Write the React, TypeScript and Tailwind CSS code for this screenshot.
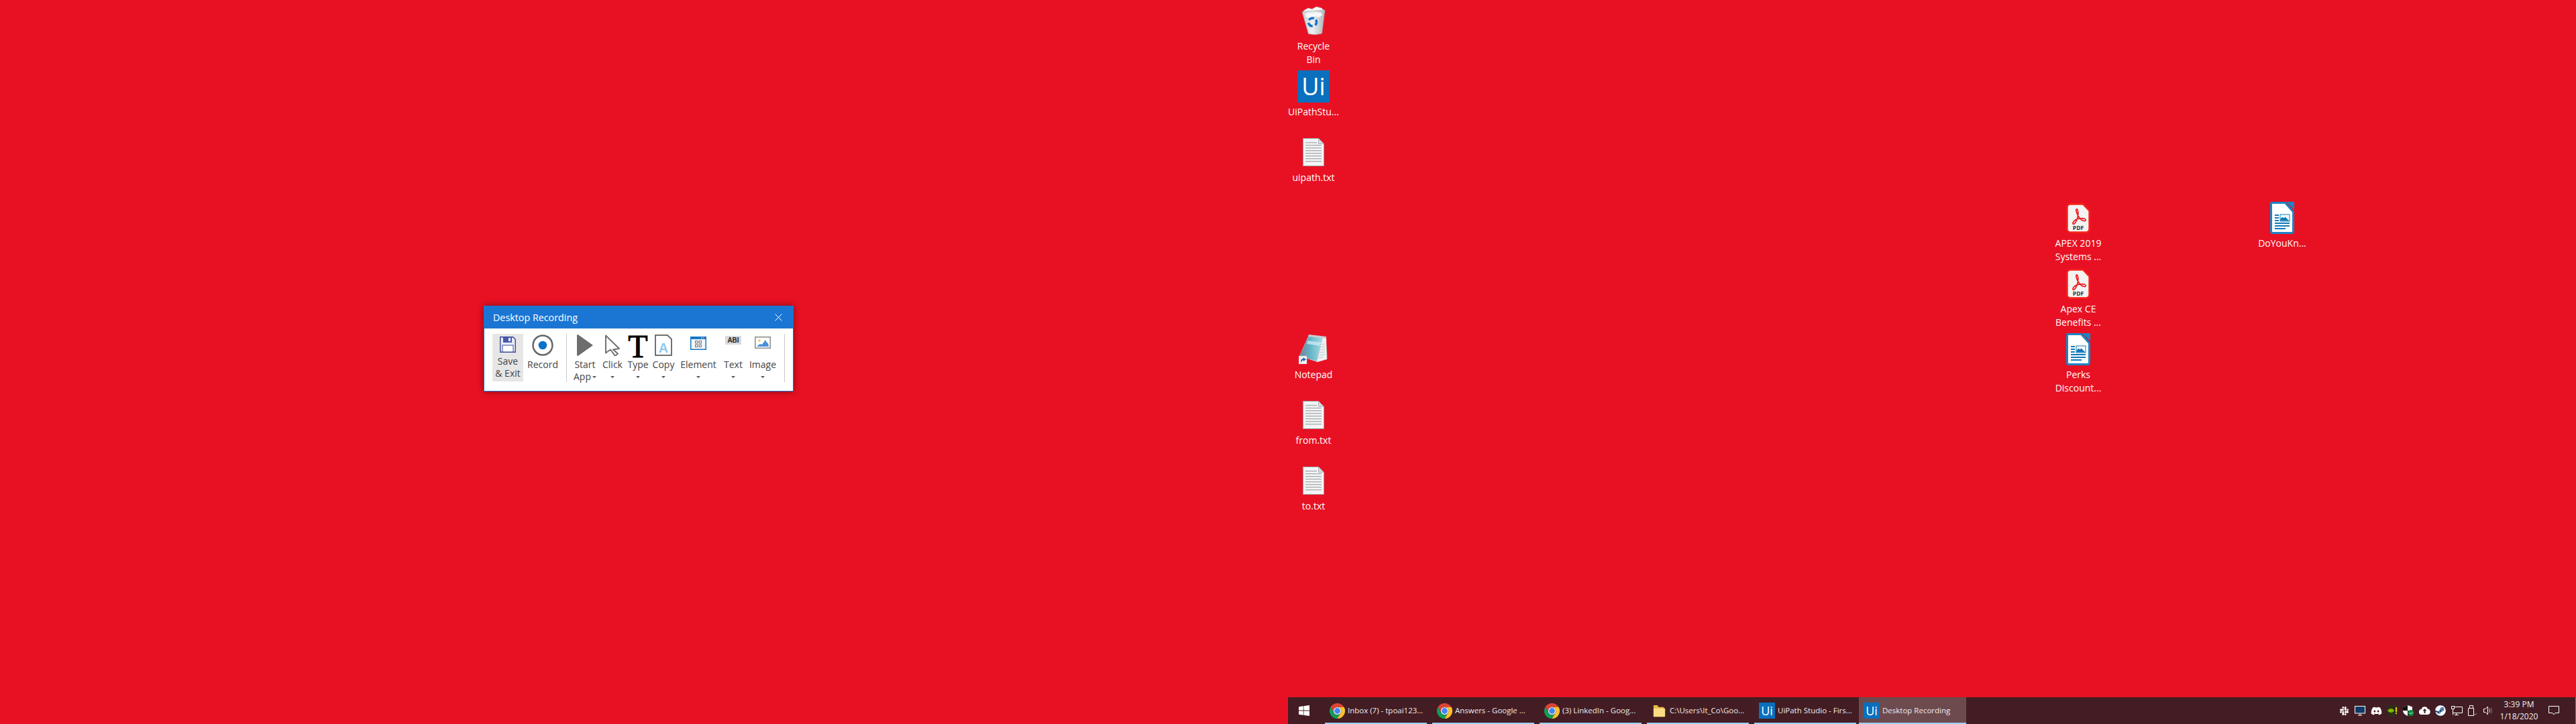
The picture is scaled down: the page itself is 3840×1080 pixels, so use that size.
import type { ReactNode } from "react";
import { FaDiscord, FaSlack, FaSteam } from "react-icons/fa";

const uiFont = "font-['Open_Sans','Noto_Sans',sans-serif]";

function TextFileIcon() {
  return (
    <svg width="32" height="42" viewBox="0 0 32 42">
      <path d="M.5.5h23l8 8v33H.5z" fill="#f4f5f6" stroke="#9aa0a4" />
      <path d="M23.5.5v8h8z" fill="#d5d9dc" stroke="#b0b5b8" />
      {[6, 10, 14, 18, 22, 26, 30, 34].map((y) => (
        <rect key={y} x="4" y={y} width={y < 10 ? 17 : 24} height="1.4" fill="#a9aeb2" />
      ))}
    </svg>
  );
}

function PdfIcon() {
  return (
    <svg width="36" height="45" viewBox="0 0 36 45">
      <path d="M6 1.5h19l9.5 10V38a5 5 0 0 1-5 5.5H6A4.5 4.5 0 0 1 1.5 39V6A4.5 4.5 0 0 1 6 1.5z" fill="#f3f3f3" stroke="#fb2118" strokeWidth="2.4" />
      <path
        d="M15.5 9c-2 1 .5 7 3 11 2 3.500 5.500 6 8.500 6.500 2.500.4 3-2.500.5-3.300-3.500-1.200-10-.2-13.500 1.800-3.500 2-5 5.500-3.500 6.200 1.800.8 4.500-3.500 5.800-7.500 1.200-3.700 2-8.500 1.200-12-.3-1.500-1.200-3-2-2.700z"
        fill="none"
        stroke="#f2161c"
        strokeWidth="1.7"
      />
      <text x="18" y="40" textAnchor="middle" fontFamily="Open Sans, sans-serif" fontWeight="700" fontSize="8.500" fill="#2f2f2f">
        PDF
      </text>
    </svg>
  );
}

function WriterIcon() {
  return (
    <svg width="36" height="48" viewBox="0 0 36 48">
      <path d="M2 1.500h20.500L34.500 15v29a2.500 2.500 0 0 1-2.500 2.500H4A2.500 2.500 0 0 1 1.500 44V3z" fill="#fff" stroke="#1b84c5" strokeWidth="3" />
      <path d="M24 0h12v12z" fill="#1b84c5" />
      <path d="M7 19h6v2H7zm0 4h6v2H7zm0 4h6v2H7zM7 31h22v2H7zm0 4h22v2H7zm0 4h16v2H7z" fill="#1078b8" />
      <rect x="15" y="19" width="14" height="10" fill="#fff" stroke="#1078b8" />
      <path d="M15.500 28.500v-3l3-3 2 2 2-2 2 2 4 4z" fill="#1078b8" />
    </svg>
  );
}

function RecycleBinIcon() {
  return (
    <svg width="36" height="42" viewBox="0 0 36 42">
      <defs>
        <linearGradient id="bin" x1="0" x2="1" y1="0" y2="0">
          <stop offset="0" stopColor="#c6cbd0" />
          <stop offset=".45" stopColor="#eef0f1" />
          <stop offset="1" stopColor="#aeb4b9" />
        </linearGradient>
      </defs>
      <path d="M3 6l7-4 6 1.500L22 0l8 2 5 5-4 5H6z" fill="#f6f6f6" stroke="#b5b9bc" strokeWidth=".5" />
      <path d="M1 7.500L35 5l-4.500 35q-10 3-20 .5z" fill="url(#bin)" stroke="#a3a9ae" strokeWidth=".7" />
      <path d="M5 11l6-2 5 2 6-3 8 1 1 4-6 3-5-2-6 3-7-2z" fill="#fff" opacity=".8" />
      <circle cx="16.500" cy="23" r="6" fill="none" stroke="#1674c6" strokeWidth="3.500" strokeDasharray="8.500 4" transform="rotate(-35 16.500 23)" />
    </svg>
  );
}

function NotepadIcon() {
  return (
    <svg width="44" height="44" viewBox="0 0 44 44">
      <defs>
        <linearGradient id="pad" x1="0" x2="1" y1="0" y2="0">
          <stop offset="0" stopColor="#7c7f93" />
          <stop offset=".45" stopColor="#62b3c6" />
          <stop offset="1" stopColor="#a9dce6" />
        </linearGradient>
      </defs>
      <path d="M40 3l3.500 32-2 3z" fill="#8a6b32" />
      <path d="M15 1l26 3 1 33-14 4L1 32z" fill="#eef2f3" />
      <path d="M15 2l21 3-9 35L1 32z" fill="url(#pad)" />
      <path d="M13.500 9l21 3-1.500 5-21-3z" fill="#d4eef3" opacity=".7" />
      <path d="M31 15l8-1M30 19l9-1M29 23l10-1M28 27l11-1M27 31l12-1M27 35l9-1" stroke="#b9c3c7" strokeWidth=".8" />
      <path d="M15 0l26 3v3L14 3z" fill="#c8cdd0" />
      <rect x="0" y="32" width="12" height="12" fill="#f3f3f3" stroke="#bbb" strokeWidth=".5" />
      <path d="M3 42c0-4 1-6 4-6l-1-2 5 3-4 3-.5-2c-1 .4-2 1.500-3.500 4z" fill="#1f5fb0" />
    </svg>
  );
}

function UiLogo({ big }: { big?: boolean }) {
  return (
    <div
      className={
        big
          ? `flex h-[48px] w-[48px] items-center justify-center bg-[#0a6fbd] text-[36px] leading-none text-white ${uiFont}`
          : `flex h-[24px] w-[24px] items-center justify-center bg-[#0a6fbd] text-[18px] leading-none text-white ${uiFont}`
      }
    >
      Ui
    </div>
  );
}

function DesktopIcon({ className, icon, children }: { className: string; icon: ReactNode; children: ReactNode }) {
  return (
    <div className={`absolute flex w-[100px] flex-col items-center ${className}`}>
      <div className="flex h-[50px] items-center justify-center">{icon}</div>
      <div className={`mt-[3px] w-full text-center text-[14px] leading-[20px] text-white ${uiFont}`}>{children}</div>
    </div>
  );
}

function Caret() {
  return <span className="inline-block h-0 w-0 border-x-[3px] border-t-[3px] border-x-transparent border-t-[#555]" />;
}

function ToolButton({ label, width, icon, caret = true }: { label: string; width: string; icon: ReactNode; caret?: boolean }) {
  return (
    <div className={`flex flex-col items-center ${width}`}>
      <div className="flex h-[37px] w-full items-start justify-center pt-px">{icon}</div>
      <div className="text-center leading-[18px]">{label}</div>
      {caret && (
        <div className="flex h-[18px] items-center">
          <Caret />
        </div>
      )}
    </div>
  );
}

function FloppyIcon() {
  return (
    <svg width="24" height="24" viewBox="0 0 24 24">
      <path d="M.7.700h19l3.600 3.600v19H.7z" fill="#e8eaf6" stroke="#3c4a9c" strokeWidth="1.400" />
      <rect x="5" y="1" width="13" height="8" fill="#4a59ab" />
      <rect x="13" y="2" width="3" height="5" fill="#e8eaf6" />
      <rect x="4" y="13" width="16" height="10" fill="#fff" stroke="#3c4a9c" />
    </svg>
  );
}

function ElementIcon() {
  return (
    <svg width="24" height="20" viewBox="0 0 24 20">
      <rect width="24" height="20" fill="#1478c4" />
      <rect x="1.500" y="4" width="21" height="14.500" fill="#f4f6f8" />
      <path d="M16 1.500h1.500v1H16zm2.500 0H20v1h-1.500z" fill="#fff" />
      <path d="M21 1.500h1.500v1H21z" fill="#f2555a" />
      <path d="M7.500 6.500h3.500V10H7.500zm5.500 0h3.500V10H13zm-5.500 5.500h3.500v3.500H7.500zm5.500 0h3.500v3.500H13z" fill="none" stroke="#6b6b6b" strokeWidth="1" />
    </svg>
  );
}

function ImageIcon() {
  return (
    <svg width="24" height="18" viewBox="0 0 24 18">
      <rect x=".75" y=".75" width="22.500" height="16.500" fill="#fff" stroke="#8a8a8a" strokeWidth="1.500" />
      <circle cx="7" cy="6" r="1.800" fill="#f2c94c" />
      <path d="M3 15l5-4 3 1 5-7 2 4 2 1 1 5z" fill="#4a90d9" />
    </svg>
  );
}

function ChromeIcon() {
  return (
    <svg className="h-[23px] w-[23px] shrink-0" viewBox="0 0 24 24">
      <path d="M12 0C7.600 0 3.700 2.400 1.600 6l5.200 9A6 6 0 0 1 12 6h10.400C20.300 2.400 16.400 0 12 0z" fill="#db4437" />
      <path d="M1.600 6A12 12 0 0 0 12 24l5.200-9A6 6 0 0 1 6.800 15z" fill="#0f9d58" />
      <path d="M22.400 6H12a6 6 0 0 1 5.200 9L12 24a12 12 0 0 0 10.400-18z" fill="#fbc02d" />
      <circle cx="12" cy="12" r="5.800" fill="#fff" />
      <circle cx="12" cy="12" r="4.600" fill="#4285f4" />
    </svg>
  );
}

function FolderIcon() {
  return (
    <svg className="h-[23px] w-[23px] shrink-0" viewBox="0 0 24 24">
      <path d="M3 3h6l2 3h8v15H3z" fill="#e8b93f" />
      <path d="M3 8h18v13H3z" fill="#fbdc82" />
    </svg>
  );
}

function TaskButton({ width, icon, label, active }: { width: string; icon: ReactNode; label: string; active?: boolean }) {
  return (
    <div
      className={`flex h-full items-center gap-[4px] border-b-2 border-[#99d1ff] pl-[7px] pt-[2px] text-[11.5px] text-[#f1eced] ${width} ${active ? "bg-[#6d4a4e]" : ""}`}
    >
      {icon}
      <span className="whitespace-nowrap">{label}</span>
    </div>
  );
}

function TrayIcon({ children }: { children: ReactNode }) {
  return <div className="flex h-full w-6 items-center justify-center">{children}</div>;
}

export default function App() {
  return (
    <div className={`relative flex h-[1080px] w-[3840px] flex-col justify-end overflow-hidden bg-[#e81123] ${uiFont}`}>
      {/* desktop icons sit on a free canvas */}
      <DesktopIcon className="left-[1908px] top-[6px]" icon={<RecycleBinIcon />}>
        Recycle
        <br />
        Bin
      </DesktopIcon>
      <DesktopIcon className="left-[1908px] top-[104px]" icon={<UiLogo big />}>
        UiPathStu...
      </DesktopIcon>
      <DesktopIcon className="left-[1908px] top-[202px]" icon={<TextFileIcon />}>
        uipath.txt
      </DesktopIcon>
      <DesktopIcon className="left-[1908px] top-[496px]" icon={<NotepadIcon />}>
        Notepad
      </DesktopIcon>
      <DesktopIcon className="left-[1908px] top-[594px]" icon={<TextFileIcon />}>
        from.txt
      </DesktopIcon>
      <DesktopIcon className="left-[1908px] top-[692px]" icon={<TextFileIcon />}>
        to.txt
      </DesktopIcon>
      <DesktopIcon className="left-[3048px] top-[300px]" icon={<PdfIcon />}>
        APEX 2019
        <br />
        Systems ...
      </DesktopIcon>
      <DesktopIcon className="left-[3048px] top-[398px]" icon={<PdfIcon />}>
        Apex CE
        <br />
        Benefits ...
      </DesktopIcon>
      <DesktopIcon className="left-[3048px] top-[496px]" icon={<WriterIcon />}>
        Perks
        <br />
        Discount...
      </DesktopIcon>
      <DesktopIcon className="left-[3352px] top-[300px]" icon={<WriterIcon />}>
        DoYouKn...
      </DesktopIcon>

      {/* recording toolbar window */}
      <div className="absolute left-[721px] top-[456px] flex h-[128px] w-[462px] flex-col border border-[#1b76d3] bg-white shadow-[0_0_10px_rgba(0,0,0,0.45)]">
        <div className="flex h-[33px] shrink-0 items-center justify-between bg-[#1b76d3] pl-[13px] pr-[16px] text-[14.3px] text-white">
          <span>Desktop Recording</span>
          <svg width="11" height="11" viewBox="0 0 11 11" stroke="#fff" strokeWidth="1">
            <path d="M.5.500l10 10M10.500.500l-10 10" />
          </svg>
        </div>
        <div className="flex items-start pl-[12px] pt-[8px] text-[14px] text-[#444]">
          <div className="flex h-[71px] w-[46px] flex-col items-center bg-[#e6e6e6] pt-[4px] text-center leading-[18px]">
            <div className="mb-[4px]">
              <FloppyIcon />
            </div>
            <span>Save</span>
            <span className="whitespace-nowrap">&amp; Exit</span>
          </div>
          <ToolButton
            label="Record"
            width="w-[58px]"
            caret={false}
            icon={
              <svg width="32" height="32" viewBox="0 0 32 32">
                <circle cx="16" cy="16" r="14.500" fill="#fff" stroke="#666" strokeWidth="2.500" />
                <circle cx="16" cy="16" r="6.300" fill="#0a72c8" />
              </svg>
            }
          />
          <div className="ml-[6px] mr-[4px] h-[72px] w-px shrink-0 bg-[#c9c9c9]" />
          <div className="flex w-[46px] flex-col items-center">
            <div className="flex h-[37px] items-start pt-px">
              <svg width="24" height="32" viewBox="0 0 24 32">
                <path d="M1.500 0L24 16 1.500 32A1.500 1.500 0 0 1 0 30.500V1.500A1.500 1.500 0 0 1 1.500 0z" fill="#6d6d6d" />
              </svg>
            </div>
            <div className="text-center leading-[18px]">
              Start
              <br />
              <span className="inline-flex items-center gap-[2px]">
                App
                <Caret />
              </span>
            </div>
          </div>
          <ToolButton
            label="Click"
            width="w-[36px]"
            icon={
              <svg width="24" height="32" viewBox="0 0 24 32">
                <path d="M2 1.500L22 21l-9 1.500 7 6-4 3.500-7-9.500-7 5z" fill="#fff" stroke="#707070" strokeWidth="2" strokeLinejoin="round" />
              </svg>
            }
          />
          <ToolButton
            label="Type"
            width="w-[40px]"
            icon={<span className="font-['Liberation_Serif',serif] text-[48px] leading-[36px] text-black [-webkit-text-stroke:1px_black]">T</span>}
          />
          <ToolButton
            label="Copy"
            width="w-[36px]"
            icon={
              <div className="relative h-[32px] w-[26px]">
                <svg className="absolute inset-0" width="26" height="32" viewBox="0 0 26 32">
                  <path d="M1 1h18l6 6v24H1z" fill="#fff" stroke="#707070" strokeWidth="2" />
                </svg>
                <span className="absolute inset-x-0 top-[11px] text-center font-['Liberation_Sans',sans-serif] text-[20px] font-bold leading-[18px] text-[#8fc8ef]">
                  A
                </span>
              </div>
            }
          />
          <ToolButton
            label="Element"
            width="w-[68px]"
            icon={
              <div className="pt-[3px]">
                <ElementIcon />
              </div>
            }
          />
          <ToolButton
            label="Text"
            width="w-[36px]"
            icon={
              <div className="mt-[2px] flex h-[13px] w-[24px] items-center justify-center bg-[#d9d9d9] font-['Liberation_Sans',sans-serif] text-[10px] font-bold leading-none text-[#222]">
                ABI
              </div>
            }
          />
          <ToolButton
            label="Image"
            width="w-[52px]"
            icon={
              <div className="pt-[3px]">
                <ImageIcon />
              </div>
            }
          />
          <div className="ml-[6px] h-[72px] w-px shrink-0 bg-[#c9c9c9]" />
        </div>
      </div>

      {/* the taskbar only spans the right monitor */}
      <div className="flex h-10 w-[1920px] items-stretch self-end bg-[#431d23]">
        <div className="flex w-[55px] shrink-0 items-center pl-[16px]">
          <svg width="16" height="16" viewBox="0 0 16 16" fill="#fff">
            <path d="M0 2.300l6.800-1v6.300H0zM7.500 1.200L16 0v7.600H7.500zM0 8.400h6.800v6.300l-6.800-1zM7.500 8.400H16V16l-8.500-1.200z" />
          </svg>
        </div>
        <div className="flex items-stretch gap-[8px]">
          <TaskButton width="w-[152px]" icon={<ChromeIcon />} label="Inbox (7) - tpoai123..." />
          <TaskButton width="w-[152px]" icon={<ChromeIcon />} label="Answers - Google ..." />
          <TaskButton width="w-[152px]" icon={<ChromeIcon />} label="(3) LinkedIn - Goog..." />
          <TaskButton width="w-[152px]" icon={<FolderIcon />} label="C:\Users\It_Co\Goo..." />
          <TaskButton width="w-[152px]" icon={<UiLogo />} label="UiPath Studio - Firs..." />
        </div>
        <div className="ml-[4px]">
          <TaskButton width="w-[160px]" icon={<UiLogo />} label="Desktop Recording" active />
        </div>

        <div className="ml-auto flex items-stretch text-white">
          <TrayIcon>
            <FaSlack className="h-[15px] w-[15px]" />
          </TrayIcon>
          <TrayIcon>
            <svg width="16" height="15" viewBox="0 0 16 15">
              <rect x=".5" y=".5" width="15" height="10.500" fill="#0f3a68" stroke="#fff" />
              <path d="M5 14h6M8 11v3" stroke="#fff" />
            </svg>
          </TrayIcon>
          <TrayIcon>
            <FaDiscord className="h-[17px] w-[17px]" />
          </TrayIcon>
          <TrayIcon>
            <svg width="16" height="16" viewBox="0 0 16 16">
              <rect width="16" height="16" fill="#2e2c1c" />
              <path d="M1 8c3-4 8-4 10 0-2 4-7 4-10 0z" fill="#76b900" />
              <rect x="13" y="3" width="2" height="7" fill="#f5d000" />
              <rect x="13" y="11" width="2" height="2" fill="#f5d000" />
            </svg>
          </TrayIcon>
          <TrayIcon>
            <svg width="18" height="16" viewBox="0 0 18 16">
              <path d="M8 0l7 2.500V8c0 3.500-3 6.500-7 8-4-1.500-7-4.500-7-8V2.500z" fill="#fff" />
              <path d="M8 0v8H1V2.500zM8 8h7c0 3.500-3 6.500-7 8z" fill="#111" />
              <circle cx="13" cy="11.500" r="4.500" fill="#10893e" />
              <path d="M11 11.500l1.500 1.500 2.500-2.500" fill="none" stroke="#fff" />
            </svg>
          </TrayIcon>
          <TrayIcon>
            <svg width="17" height="12" viewBox="0 0 17 12">
              <path d="M4 12a4 4 0 0 1-.5-8A5 5 0 0 1 13 3.500 4.300 4.300 0 0 1 13 12z" fill="#fff" />
              <path d="M8.500 3l3 3.500H9.500V10h-2V6.500h-2z" fill="#431d23" />
            </svg>
          </TrayIcon>
          <TrayIcon>
            <div className="flex h-4 w-4 items-center justify-center rounded-full bg-[#1b4f86]">
              <FaSteam className="h-4 w-4 text-white" />
            </div>
          </TrayIcon>
          <TrayIcon>
            <svg width="17" height="15" viewBox="0 0 17 15" fill="none" stroke="#fff" strokeWidth="1">
              <path d="M4.500 1.500h12v9h-12M.5.500h4v4h-4zM2.500 4.500v9M2.500 10.500h5v3M5 13.500h6" />
            </svg>
          </TrayIcon>
          <TrayIcon>
            <svg width="14" height="16" viewBox="0 0 14 16" fill="none" stroke="#fff" strokeWidth="1">
              <path d="M2.500.500h5v4h-5zM.5 4.500h8v11h-8z" />
              <path d="M9 13l1.500 1.500L13 12" stroke="#aaa" />
            </svg>
          </TrayIcon>
          <TrayIcon>
            <svg width="16" height="16" viewBox="0 0 16 16" fill="none" stroke="#fff" strokeWidth="1">
              <path d="M.5 5.500h2.500l3.500-3.500v12L3 10.500H.5z" />
              <path d="M9 5q1.500 3 0 6" stroke="#ddd" />
              <path d="M11.500 3.500q2.500 4.500 0 9" stroke="#8d7376" />
            </svg>
          </TrayIcon>
          <div className="flex w-[66px] flex-col items-center justify-center text-[12px] leading-[18px] text-[#f1eced]">
            <span>3:39 PM</span>
            <span>1/18/2020</span>
          </div>
          <div className="flex w-[38px] items-center justify-center">
            <svg width="16" height="16" viewBox="0 0 16 16" fill="none" stroke="#fff" strokeWidth="1">
              <path d="M.5 1.500h15v10H10l-2 2.500-2-2.500H.5z" />
            </svg>
          </div>
          <div className="w-[14px] border-r border-[#8d7376]" />
        </div>
      </div>
    </div>
  );
}
